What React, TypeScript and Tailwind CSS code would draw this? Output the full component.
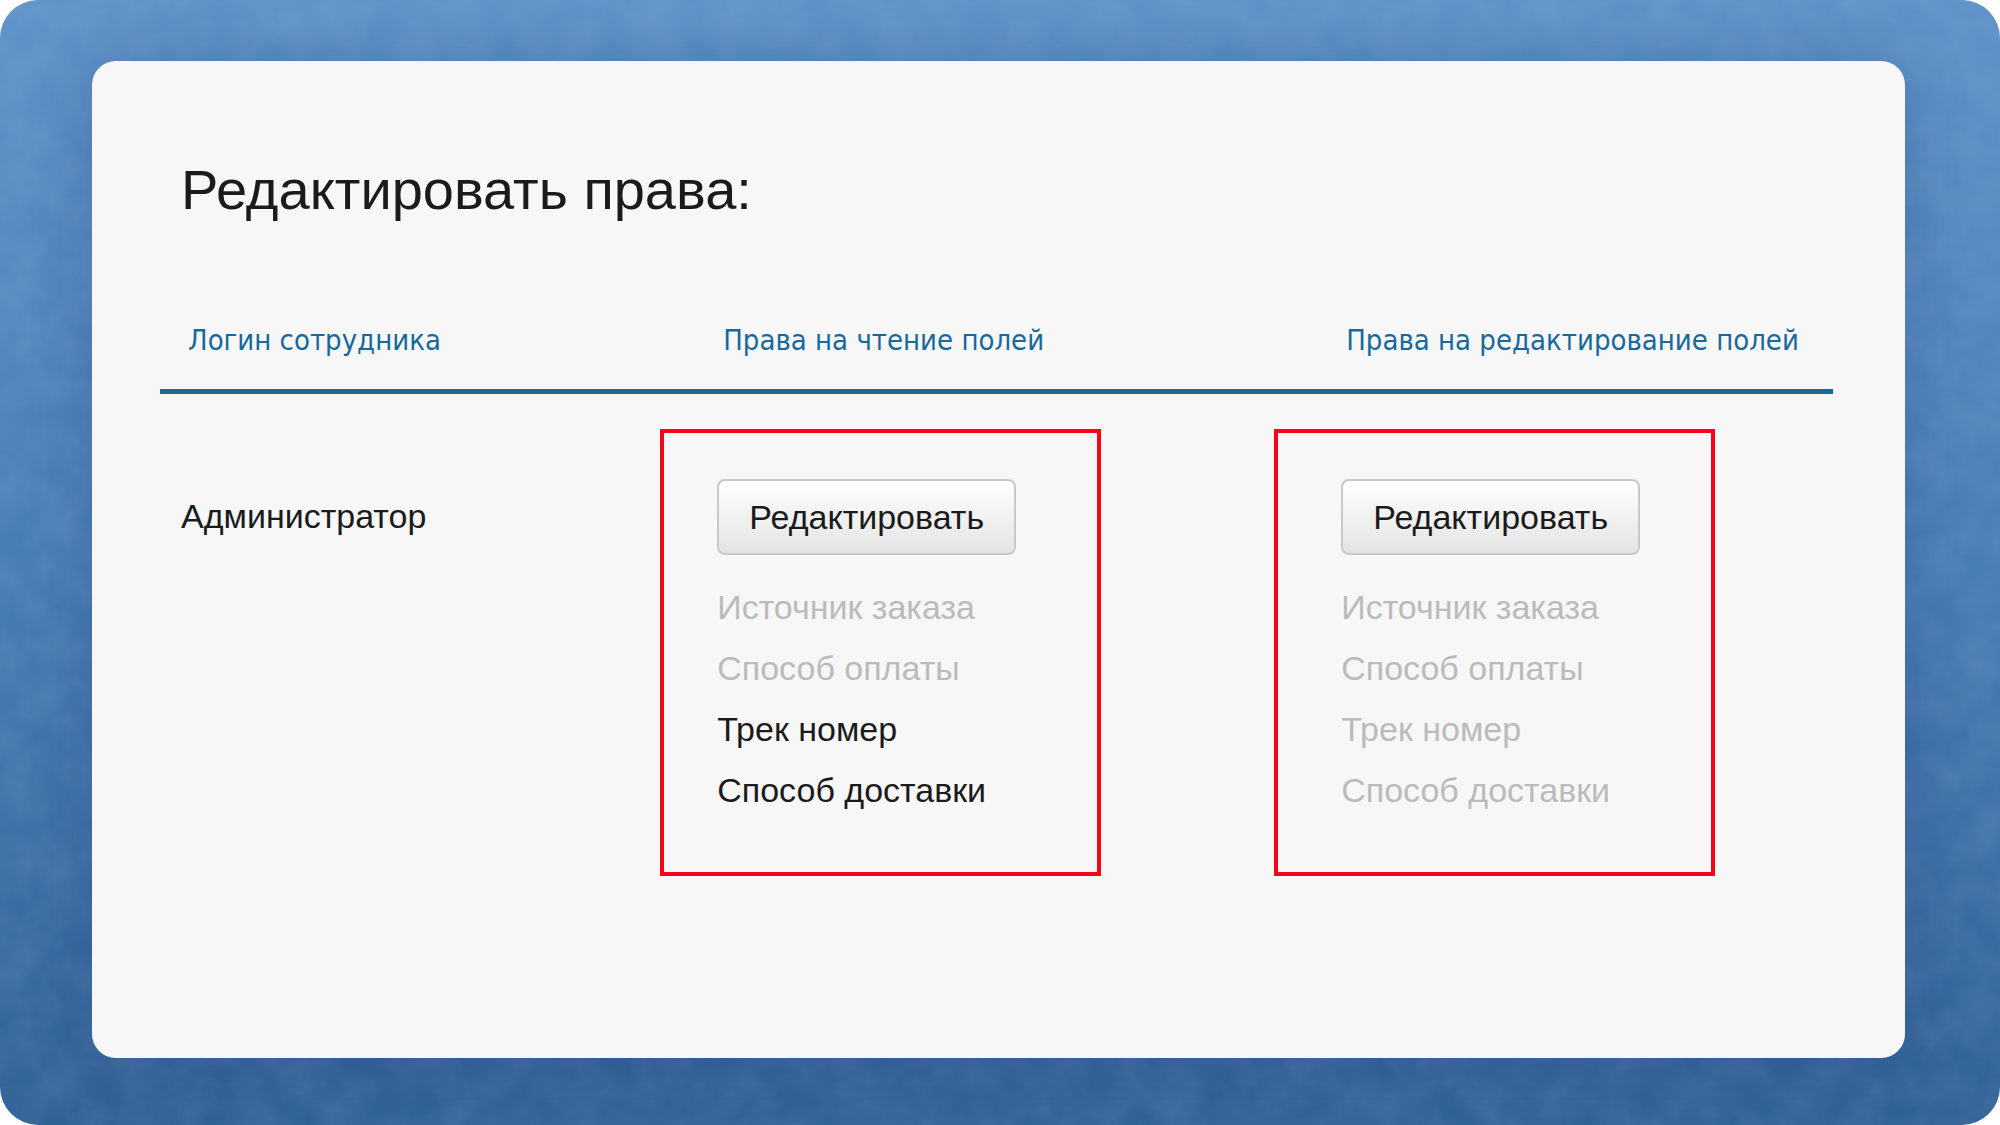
type Field = { name: string; enabled: boolean };

const readFields: Field[] = [
  { name: "Источник заказа", enabled: false },
  { name: "Способ оплаты", enabled: false },
  { name: "Трек номер", enabled: true },
  { name: "Способ доставки", enabled: true },
];

const editFields: Field[] = readFields.map((f) => ({ ...f, enabled: false }));

function FieldRights({ fields, indent }: { fields: Field[]; indent: string }) {
  return (
    <div className={`w-[441px] border-4 border-[#f50519] pt-[46px] pb-[51px] ${indent}`}>
      <button
        type="button"
        className="h-[76px] w-[299px] rounded-lg border-2 border-[#c8c8c8] bg-linear-to-b from-white to-[#e4e4e4] text-[34px]"
      >
        Редактировать
      </button>
      <ul className="mt-[22px] text-[34px] leading-[61px]">
        {fields.map((f) => (
          <li key={f.name} className={f.enabled ? "text-[#1b1b1b]" : "text-[#bbbbbb]"}>
            {f.name}
          </li>
        ))}
      </ul>
    </div>
  );
}

/* Mottled paint texture over the blue backdrop */
function Texture() {
  return (
    <svg className="absolute inset-0 h-full w-full opacity-10" aria-hidden="true">
      <filter id="paint" x="0" y="0" width="100%" height="100%">
        <feTurbulence type="fractalNoise" baseFrequency="0.025" numOctaves="3" seed="7" />
        <feColorMatrix values="0 0 0 0 0.6  0 0 0 0 0.7  0 0 0 0 0.85  1.6 0 0 0 -0.4" />
      </filter>
      <rect width="100%" height="100%" filter="url(#paint)" />
    </svg>
  );
}

export default function App() {
  return (
    <div className="min-h-screen bg-white">
      <main className="relative flex min-h-screen overflow-hidden rounded-[38px] bg-linear-to-b from-[#5e92c8] via-[#497db6] to-[#316297] pt-[61px] pr-[95px] pb-[67px] pl-[92px] font-['Liberation_Sans',Arial,sans-serif] text-[#1b1b1b]">
        <Texture />
        <section className="relative flex-1 rounded-3xl bg-[#f7f7f7] pt-[97px] pr-[72px] pl-[68px] shadow-[0_0_60px_rgba(25,45,100,0.25)]">
          <h1 className="pl-[21px] text-[56px] leading-16">Редактировать права:</h1>
          <table className="mt-[98px] w-full table-fixed border-collapse text-left">
            <colgroup>
              <col className="w-[29.9%]" />
              <col className="w-[36.7%]" />
              <col />
            </colgroup>
            <thead>
              <tr className="border-b-[5px] border-[#176a9a] font-['DejaVu_Sans_Condensed','DejaVu_Sans',sans-serif] text-[29px] leading-10 text-[#17699b]">
                <th scope="col" className="pb-[29px] pl-7 font-normal">Логин сотрудника</th>
                <th scope="col" className="pb-[29px] pl-[63px] font-normal">Права на чтение полей</th>
                <th scope="col" className="pb-[29px] pl-[72px] font-normal whitespace-nowrap">Права на редактирование полей</th>
              </tr>
            </thead>
            <tbody>
              <tr className="align-top">
                <td className="pt-[92px] pl-[21px] text-[34px] leading-[60px]">Администратор</td>
                <td className="pt-[35px]"><FieldRights fields={readFields} indent="pl-[53px]" /></td>
                <td className="pt-[35px]"><FieldRights fields={editFields} indent="pl-[63px]" /></td>
              </tr>
            </tbody>
          </table>
        </section>
      </main>
    </div>
  );
}
